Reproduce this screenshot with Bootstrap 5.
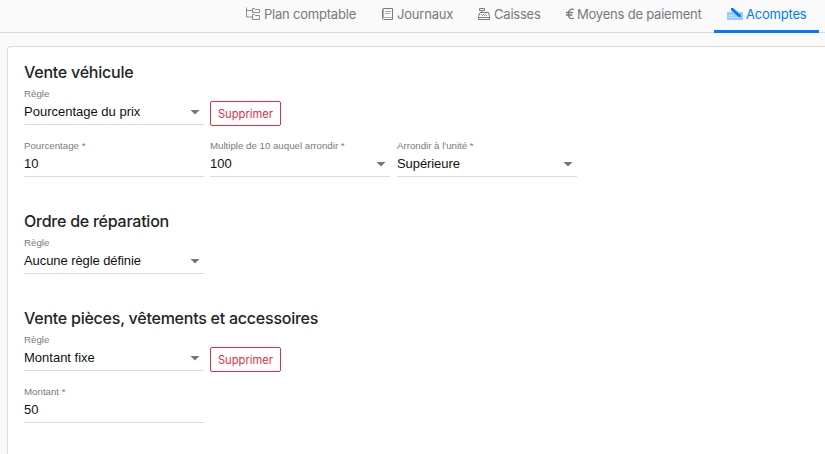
<!DOCTYPE html>
<html lang="fr">
<head>
<meta charset="utf-8">
<meta name="viewport" content="width=device-width, initial-scale=1">
<title>Acomptes</title>
<link href="https://cdn.jsdelivr.net/npm/bootstrap@5.3.0/dist/css/bootstrap.min.css" rel="stylesheet">
<style>
body{background:#fafafa;color:#212529;font-family:Inter,sans-serif;min-height:100vh}
.tabs-bar{height:33px;border-bottom:1px solid #d9dbe2;padding-right:6px}
.tabs-bar .nav-link{height:33px;padding:0 0 3px 13px;color:#747b82;font-size:13px;letter-spacing:-.21px;line-height:20px;border-bottom:3px solid transparent;white-space:nowrap}
.tabs-bar .nav-link svg{flex:none;margin-right:4px}
.tabs-bar .w-moy svg,.tabs-bar .w-jour svg,.tabs-bar .w-aco svg{margin-right:3px}
.tabs-bar .nav-link.active{color:#007bff;border-bottom-color:#007bff}
.w-plan{width:136px}.w-jour{width:96px}.w-cais{width:88px}.w-moy{width:161px}.w-aco{width:105px}
.panel{margin:13px 0 0 7px;height:calc(100vh - 46px);border:1px solid #dcdcdc;border-right:0;border-bottom:0;border-radius:4px 0 0 0;background:#fff;padding:15px 16px 0}
.rule-title{font-size:16px;font-weight:500;line-height:20px;margin:0;letter-spacing:-.24px}
.rule-set{height:149px}
.rule-set.short{height:97px}
.rule-set:last-child{height:auto}
.fields{height:52px;gap:6px}
.field{width:180px;height:43px;border-bottom:1px solid #dcdcdc;font-family:"Liberation Sans",sans-serif}
.field + .field + .field{margin-left:1px}
.field label{display:block;font-size:9.75px;letter-spacing:-.03px;line-height:12px;color:#7b7b7b;padding-top:6px;white-space:nowrap}
.field-value{font-size:13px;line-height:16px;color:#111;padding:4px 4px 0 0}
.field-value.wide-gap{letter-spacing:-.08px}
.caret{width:10px;height:5px;background:#757575;clip-path:polygon(0 0,100% 0,50% 100%)}
.btn-remove{margin-top:19px;width:71px;height:25px;padding:0;font-size:11.2px;line-height:22px;border-radius:2px;--bs-btn-color:#e32f45;--bs-btn-border-color:#e32f45}
</style>
</head>
<body>
<nav class="nav tabs-bar justify-content-end flex-nowrap">
  <a class="nav-link w-plan d-flex align-items-center" href="#"><svg width="14" height="13" viewBox="0 0 14 13" fill="none" stroke="currentColor" stroke-opacity=".85"><path d="M.5.5v9.5h6M.5 3.5h6M6.5 1.5h2l1 1h4v3h-7zM6.5 7.5h2l1 1h4v4h-7z"/></svg><span>Plan comptable</span></a>
  <a class="nav-link w-jour d-flex align-items-center" href="#"><svg width="12" height="12" viewBox="0 0 12 12" fill="none" stroke="currentColor"><path d="M1.5.5h9v11h-9q-1 0-1-1v-9q0-1 1-1z"/><path d="M1 9.5h9M3 3.5h6M3 5.5h5M1.5 1v8" stroke-opacity=".6"/></svg><span>Journaux</span></a>
  <a class="nav-link w-cais d-flex align-items-center" href="#"><svg width="12" height="12" viewBox="0 0 12 12" fill="none" stroke="currentColor"><path d="M1.5.5h5v2h-5zM4 2.5v2M2 4.5h8.5l1 4v3H.5v-3zM.5 9.5h11"/><path d="M3 6.5h6M4 7.5h5" stroke-dasharray="1 1" stroke-opacity=".8"/></svg><span>Caisses</span></a>
  <a class="nav-link w-moy d-flex align-items-center" href="#"><svg width="8" height="12" viewBox="0 0 8 12" fill="none" stroke="currentColor" stroke-width="1.3"><path d="M8 1.5C4.5.2 2.4 2.2 2.4 6s2.1 5.4 5.6 4.3M0 4.5h7M0 7h6.4"/></svg><span>Moyens de paiement</span></a>
  <a class="nav-link active w-aco d-flex align-items-center" href="#"><svg width="16" height="12" viewBox="0 0 16 12"><path fill="#99caff" d="M0 4h16v8H0z"/><path fill="#c4e0ff" d="M2 7h5v1H2zM2 9h10v1H2z"/><path d="M5 1l7 6" stroke="#fafafa" stroke-width="4.2"/><path d="M4 0h2l7.3 6.3.7 2.7-2.9-.3L4 2.2z" fill="#007bff"/></svg><span>Acomptes</span></a>
</nav>
<main class="panel">
  <section class="rule-set">
    <h2 class="rule-title">Vente véhicule</h2>
    <div class="fields d-flex">
      <div class="field"><label>Règle</label><div class="field-value d-flex justify-content-between align-items-center"><span>Pourcentage du prix</span><i class="caret"></i></div></div>
      <button class="btn btn-outline-danger btn-remove" type="button">Supprimer</button>
    </div>
    <div class="fields d-flex">
      <div class="field"><label>Pourcentage *</label><div class="field-value">10</div></div>
      <div class="field"><label>Multiple de 10 auquel arrondir *</label><div class="field-value d-flex justify-content-between align-items-center"><span>100</span><i class="caret"></i></div></div>
      <div class="field"><label>Arrondir à l'unité *</label><div class="field-value wide-gap d-flex justify-content-between align-items-center"><span>Supérieure</span><i class="caret"></i></div></div>
    </div>
  </section>
  <section class="rule-set short">
    <h2 class="rule-title">Ordre de réparation</h2>
    <div class="fields d-flex">
      <div class="field"><label>Règle</label><div class="field-value wide-gap d-flex justify-content-between align-items-center"><span>Aucune règle définie</span><i class="caret"></i></div></div>
    </div>
  </section>
  <section class="rule-set">
    <h2 class="rule-title">Vente pièces, vêtements et accessoires</h2>
    <div class="fields d-flex">
      <div class="field"><label>Règle</label><div class="field-value d-flex justify-content-between align-items-center"><span>Montant fixe</span><i class="caret"></i></div></div>
      <button class="btn btn-outline-danger btn-remove" type="button">Supprimer</button>
    </div>
    <div class="fields d-flex">
      <div class="field"><label>Montant *</label><div class="field-value">50</div></div>
    </div>
  </section>
</main>
<script src="https://cdn.jsdelivr.net/npm/bootstrap@5.3.0/dist/js/bootstrap.bundle.min.js"></script>
</body>
</html>
